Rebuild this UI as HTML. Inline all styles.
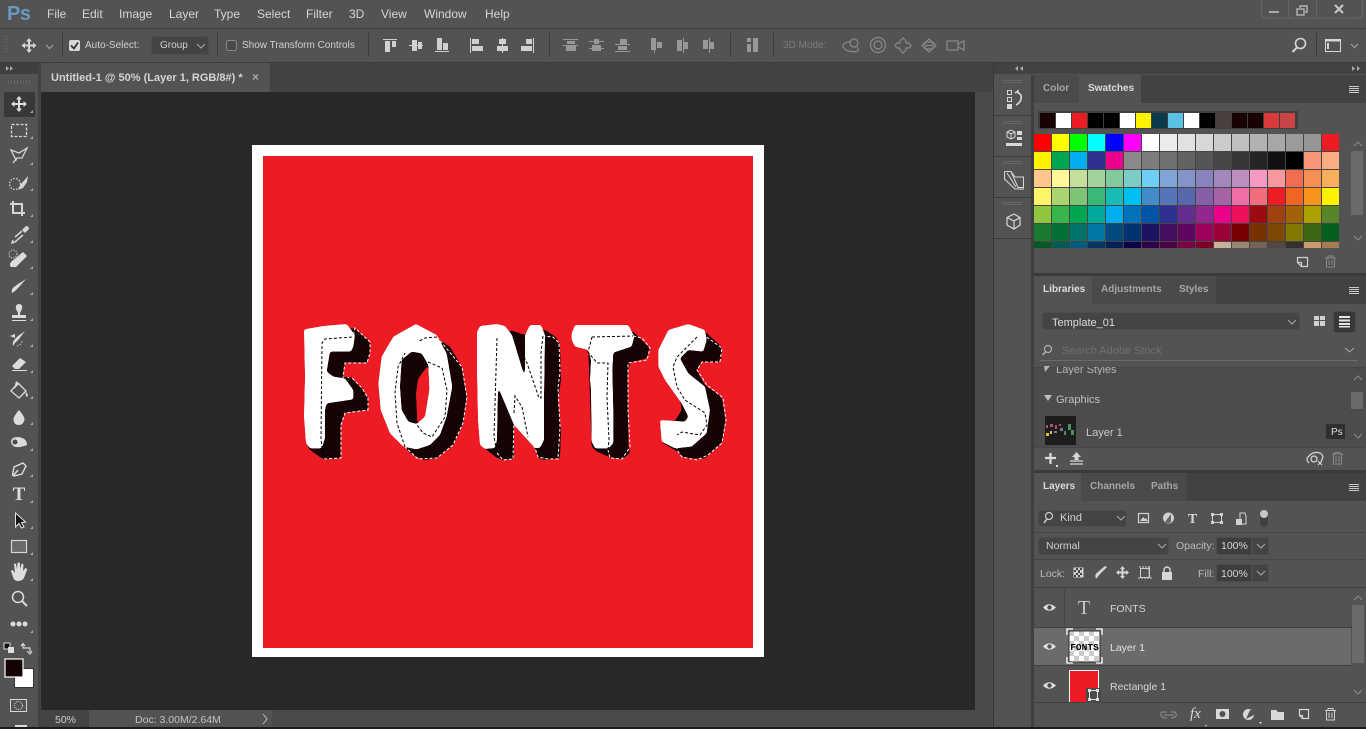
<!DOCTYPE html>
<html><head><meta charset="utf-8"><title>Photoshop</title>
<style>
html,body{margin:0;padding:0;background:#535353;}
#p{position:relative;width:1366px;height:729px;overflow:hidden;background:#535353;font-family:"Liberation Sans",sans-serif;font-size:11px;color:#d0d0d0;}
#p div,#p span.t{position:absolute;white-space:nowrap;}
.t{position:absolute;white-space:nowrap;line-height:14px;}
.m{top:7px;font-size:12px;color:#d6d6d6;}
.tab{font-size:10px;font-weight:bold;color:#a6a6a6;line-height:14px;}
#sw{left:1034px;top:134px;width:305px;height:114px;overflow:hidden;display:grid;grid-template-columns:repeat(17,17px);grid-auto-rows:17px;gap:1px;background:#454545;}
#sw i,#rc i{display:block;}
#sw i{position:static;}
#rc{left:1038px;top:111px;width:260px;height:18px;background:#3f3f3f;display:grid;grid-template-columns:repeat(16,15px);gap:1px;padding:2px 0 0 2px;box-sizing:border-box;grid-auto-rows:15px;}
svg{position:absolute;left:0;top:0;}
</style></head><body><div id="p">

<!-- structural bands -->
<div style="left:0;top:28px;width:1366px;height:1px;background:#3a3a3a"></div>
<div style="left:0;top:62px;width:1366px;height:1px;background:#3a3a3a"></div>
<div style="left:0;top:63px;width:41px;height:11px;background:#3f3f3f"></div>
<div style="left:38px;top:63px;width:3px;height:666px;background:#434343"></div>
<div style="left:41px;top:63px;width:952px;height:29px;background:#434343"></div>
<div style="left:41px;top:63px;width:229px;height:29px;background:#535353"></div>
<div style="left:41px;top:92px;width:934px;height:618px;background:#282828"></div>
<div style="left:975px;top:92px;width:18px;height:618px;background:#4b4b4b"></div>
<div style="left:41px;top:710px;width:952px;height:17px;background:#4a4a4a"></div>
<div style="left:41px;top:710px;width:48px;height:17px;background:#444"></div>
<div style="left:89px;top:710px;width:183px;height:17px;background:#525252"></div>
<div style="left:0;top:727px;width:1366px;height:2px;background:#1c1c1c"></div>
<div style="left:4px;top:92px;width:31px;height:25px;background:#383838"></div>

<!-- doc -->
<div style="left:252px;top:145px;width:512px;height:512px;background:#fff"></div>
<div style="left:263px;top:156px;width:490px;height:492px;background:#ed1c24"></div>

<!-- right dock -->
<div style="left:993px;top:63px;width:373px;height:11px;background:#424242"></div>
<div style="left:993px;top:63px;width:1px;height:664px;background:#393939"></div>
<div style="left:1031px;top:75px;width:3px;height:652px;background:#3f3f3f"></div>
<div style="left:994px;top:115px;width:37px;height:1px;background:#3a3a3a"></div>
<div style="left:994px;top:156px;width:37px;height:1px;background:#3a3a3a"></div>
<div style="left:994px;top:197px;width:37px;height:1px;background:#3a3a3a"></div>
<div style="left:994px;top:238px;width:37px;height:1px;background:#3a3a3a"></div>

<!-- color panel -->
<div style="left:1034px;top:75px;width:332px;height:28px;background:#424242"></div>
<div style="left:1034px;top:75px;width:45px;height:28px;background:#4a4a4a"></div>
<div style="left:1079px;top:75px;width:62px;height:28px;background:#535353"></div>
<div style="left:1034px;top:273px;width:332px;height:3px;background:#3a3a3a"></div>

<!-- libraries panel -->
<div style="left:1034px;top:276px;width:332px;height:28px;background:#424242"></div>
<div style="left:1034px;top:276px;width:58px;height:28px;background:#535353"></div>
<div style="left:1092px;top:276px;width:77px;height:28px;background:#4a4a4a"></div>
<div style="left:1169px;top:276px;width:47px;height:28px;background:#4a4a4a"></div>
<div style="left:1042px;top:312px;width:258px;height:18px;background:#444;border-radius:3px;border:1px solid #4d4d4d;box-sizing:border-box"></div>
<div style="left:1333px;top:311px;width:23px;height:22px;background:#383838;border-radius:3px;border:1px solid #4a4a4a;box-sizing:border-box"></div>
<div style="left:1040px;top:360px;width:318px;height:1px;background:#6a6a6a"></div>
<div style="left:1034px;top:367px;width:332px;height:80px;background:#4c4c4c"></div>
<div style="left:1034px;top:367px;width:332px;height:1px;background:#454545"></div>
<div style="left:1034px;top:447px;width:332px;height:1px;background:#464646"></div>
<div style="left:1034px;top:470px;width:332px;height:3px;background:#3a3a3a"></div>

<!-- layers panel -->
<div style="left:1034px;top:473px;width:332px;height:28px;background:#424242"></div>
<div style="left:1034px;top:473px;width:47px;height:28px;background:#535353"></div>
<div style="left:1081px;top:473px;width:60px;height:28px;background:#4a4a4a"></div>
<div style="left:1141px;top:473px;width:45px;height:28px;background:#4a4a4a"></div>
<div style="left:1038px;top:510px;width:89px;height:17px;background:#444;border-radius:3px;border:1px solid #4d4d4d;box-sizing:border-box"></div>
<div style="left:1038px;top:537px;width:131px;height:18px;background:#444;border-radius:3px;border:1px solid #4d4d4d;box-sizing:border-box"></div>
<div style="left:1216px;top:537px;width:36px;height:18px;background:#3d3d3d;border:1px solid #4d4d4d;box-sizing:border-box"></div>
<div style="left:1252px;top:537px;width:17px;height:18px;background:#444;border:1px solid #4d4d4d;box-sizing:border-box"></div>
<div style="left:1216px;top:564px;width:36px;height:18px;background:#3d3d3d;border:1px solid #4d4d4d;box-sizing:border-box"></div>
<div style="left:1252px;top:564px;width:17px;height:18px;background:#444;border:1px solid #4d4d4d;box-sizing:border-box"></div>
<div style="left:1034px;top:532px;width:332px;height:1px;background:#474747"></div>
<div style="left:1034px;top:559px;width:332px;height:1px;background:#474747"></div>
<div style="left:1034px;top:587px;width:332px;height:1px;background:#3f3f3f"></div>
<div style="left:1034px;top:627px;width:318px;height:1px;background:#3f3f3f"></div>
<div style="left:1034px;top:628px;width:317px;height:37px;background:#6b6b6b"></div>
<div style="left:1034px;top:665px;width:318px;height:1px;background:#3f3f3f"></div>
<div style="left:1064px;top:588px;width:1px;height:39px;background:#474747"></div>
<div style="left:1034px;top:702px;width:332px;height:1px;background:#3f3f3f"></div>
<!-- scrollbars -->
<div style="left:1351px;top:151px;width:12px;height:64px;background:#6a6a6a"></div>
<div style="left:1351px;top:392px;width:12px;height:17px;background:#6a6a6a"></div>
<div style="left:1352px;top:605px;width:12px;height:58px;background:#6a6a6a"></div>

<!-- swatches -->
<div id="rc">
<i style="background:#160302"></i><i style="background:#fff"></i><i style="background:#ed1c24"></i><i style="background:#000"></i><i style="background:#000"></i><i style="background:#fff"></i><i style="background:#fff200"></i><i style="background:#0b3c4d"></i><i style="background:#5bc0e4"></i><i style="background:#fff"></i><i style="background:#000"></i><i style="background:#4a4040"></i><i style="background:#160302"></i><i style="background:#160302"></i><i style="background:#d93a3a"></i><i style="background:#c94545"></i>
</div>
<div id="sw">
<i style="background:#f00"></i><i style="background:#ff0"></i><i style="background:#0f0"></i><i style="background:#0ff"></i><i style="background:#00f"></i><i style="background:#f0f"></i><i style="background:#fff"></i><i style="background:#ebebeb"></i><i style="background:#e1e1e1"></i><i style="background:#d7d7d7"></i><i style="background:#cbcbcb"></i><i style="background:#c0c0c0"></i><i style="background:#b2b2b2"></i><i style="background:#a7a7a7"></i><i style="background:#9b9b9b"></i><i style="background:#959595"></i><i style="background:#ed1c24"></i>
<i style="background:#fff200"></i><i style="background:#00a651"></i><i style="background:#00aeef"></i><i style="background:#2e3192"></i><i style="background:#ec008c"></i><i style="background:#898989"></i><i style="background:#7d7d7d"></i><i style="background:#707070"></i><i style="background:#636363"></i><i style="background:#555"></i><i style="background:#464646"></i><i style="background:#363636"></i><i style="background:#252525"></i><i style="background:#111"></i><i style="background:#000"></i><i style="background:#f7977a"></i><i style="background:#f9ad81"></i>
<i style="background:#fdc68a"></i><i style="background:#fff79a"></i><i style="background:#c4df9b"></i><i style="background:#a2d39c"></i><i style="background:#82ca9d"></i><i style="background:#7bcdc8"></i><i style="background:#6ecff6"></i><i style="background:#7ea7d8"></i><i style="background:#8493ca"></i><i style="background:#8882be"></i><i style="background:#a187be"></i><i style="background:#bc8dbf"></i><i style="background:#f49ac2"></i><i style="background:#f6989d"></i><i style="background:#f26c4f"></i><i style="background:#f68e55"></i><i style="background:#fbaf5c"></i>
<i style="background:#fff467"></i><i style="background:#acd372"></i><i style="background:#7cc576"></i><i style="background:#3bb878"></i><i style="background:#1abbb4"></i><i style="background:#00bff3"></i><i style="background:#438cca"></i><i style="background:#5574b9"></i><i style="background:#5868ac"></i><i style="background:#855fa8"></i><i style="background:#a763a8"></i><i style="background:#ef6ea8"></i><i style="background:#f16d7e"></i><i style="background:#ee1d24"></i><i style="background:#f16522"></i><i style="background:#f7941d"></i><i style="background:#fff200"></i>
<i style="background:#8fc63d"></i><i style="background:#37b44a"></i><i style="background:#00a650"></i><i style="background:#00a99e"></i><i style="background:#00aeef"></i><i style="background:#0072bc"></i><i style="background:#0054a5"></i><i style="background:#2f3192"></i><i style="background:#652c91"></i><i style="background:#91278f"></i><i style="background:#ed008c"></i><i style="background:#ee105a"></i><i style="background:#9d0a0f"></i><i style="background:#a1410d"></i><i style="background:#a36209"></i><i style="background:#aba000"></i><i style="background:#588528"></i>
<i style="background:#197b30"></i><i style="background:#007236"></i><i style="background:#00736a"></i><i style="background:#0076a4"></i><i style="background:#004a80"></i><i style="background:#003370"></i><i style="background:#1d1363"></i><i style="background:#450e61"></i><i style="background:#62055f"></i><i style="background:#9e005c"></i><i style="background:#9d0039"></i><i style="background:#790000"></i><i style="background:#7b3000"></i><i style="background:#7c4900"></i><i style="background:#827a00"></i><i style="background:#3e6617"></i><i style="background:#045f20"></i>
<i style="background:#005826"></i><i style="background:#005952"></i><i style="background:#005b7e"></i><i style="background:#003562"></i><i style="background:#002056"></i><i style="background:#0c004b"></i><i style="background:#30004a"></i><i style="background:#4b0048"></i><i style="background:#7a0045"></i><i style="background:#7a0026"></i><i style="background:#c7b299"></i><i style="background:#998675"></i><i style="background:#736357"></i><i style="background:#534741"></i><i style="background:#362f2d"></i><i style="background:#c69c6d"></i><i style="background:#a77c50"></i>
</div>

<!-- thumbnails -->
<div style="left:1045px;top:416px;width:31px;height:29px;background:#1d1d1d"></div>
<div style="left:1069px;top:670px;width:30px;height:32px;background:#ed1c24;border:1px solid #fff;border-bottom:none;box-sizing:border-box"></div>

<svg width="1366" height="729" viewBox="0 0 1366 729" xmlns="http://www.w3.org/2000/svg">
<defs>
<pattern id="ck" width="10" height="10" patternUnits="userSpaceOnUse" x="1069" y="631"><rect width="10" height="10" fill="#fff"/><rect width="5" height="5" fill="#ccc"/><rect x="5" y="5" width="5" height="5" fill="#ccc"/></pattern>
<filter id="sm" x="0" y="0" width="1" height="1" filterUnits="objectBoundingBox" color-interpolation-filters="sRGB"><feGaussianBlur stdDeviation="1.300"/><feComponentTransfer><feFuncA type="linear" slope="10" intercept="-4.500"/></feComponentTransfer></filter>
</defs>

<!-- FONTS artwork: shadows -->
<g filter="url(#sm)">
<g transform="translate(290 310) scale(.3333)" fill="#160304">
<path d="M100 60L195 55L240 95L240 130L232 158L165 158L158 200L185 205L215 235L235 265L235 300L165 308L152 345L152 445L100 448L60 420L48 400L60 200Z"/>
<path fill-rule="evenodd" d="M378 45L430 78L480 110L515 170L530 260L520 340L490 405L440 445L400 450L360 430L345 410L300 370L272 300L265 220L275 140L310 80ZM415 165L385 205L378 250L382 342L405 320L418 240Z"/>
</g>
<path fill="#160304" d="M510 330L525 335L530 328L545 330L556 337L560 345L561 380L558 400L561 430L560 458L545 460L538 458L535 448L525 435L515 400L505 350Z"/>
<path fill="#160304" d="M497 385L514 420L514 459L503 460L497 458L488 451L480 445L497 440Z"/>
<g transform="translate(515 310) scale(.3333)" fill="#160304">
<path d="M230 60L355 65L405 115L395 145L345 158L338 190L340 300L340 400L345 430L320 448L280 440L245 425L230 410L220 120Z"/>
<path d="M520 42L570 65L620 110L620 145L610 158L560 155L545 180L570 225L620 260L632 330L620 400L570 445L510 445L480 420L440 398L500 300L480 170Z"/>
</g>
</g>
<!-- FONTS artwork: faces -->
<g filter="url(#sm)">
<g transform="translate(290 310) scale(.3333)" fill="#fff">
<path d="M42 58L100 48L170 42L195 75L190 110L183 125L120 125L110 185L130 200L165 205L190 240L190 268L110 280L105 300L105 385L95 415L60 415L48 400L42 320L45 200Z"/>
<path fill-rule="evenodd" d="M378 42L440 75L470 130L487 230L470 320L450 375L420 405L380 418L340 410L300 370L272 300L265 220L275 140L310 80ZM365 125L335 150L330 230L335 300L355 335L380 342L405 320L418 240L415 165L395 130Z"/>
</g>
<path fill="#fff" d="M477 332L480 326L497 324L505 326L512 335L525 378L525 335L530 325L541 325L545 335L544 400L544 440L540 448L535 448L514 425L498 387L497 440L495 448L485 449L480 445L478 420L477 370Z"/>
<g transform="translate(515 310) scale(.3333)" fill="#fff">
<path d="M170 70L180 45L255 45L340 45L358 80L350 110L295 128L292 180L295 300L295 400L280 415L240 415L230 395L228 240L225 210L228 150L220 120L180 110L170 90Z"/>
<path d="M430 120L460 60L520 42L570 60L575 90L565 125L520 120L495 145L520 190L570 230L585 300L575 370L530 410L480 415L440 395L435 330L510 335L520 320L500 280L450 210L430 170Z"/>
</g>
</g>
<!-- marching ants -->
<g fill="none" stroke-width="1" stroke-dasharray="3 2">
<g stroke="#fff">
<path d="M322 343L325 339L353 337L355 328L370 342L370 353L367 363L345 363L343 377L352 378L362 388L368 398L368 410L345 413L341 425L341 458L323 459L322 458"/>
<path d="M437 337L462 367L467 397L463 423L453 445L437 458L418 459L405 447"/>
<path d="M497 453L503 460L513 459L514 417"/>
<path d="M528 437L535 448L538 457L548 459L558 459L560 427L558 387L560 373L559 343L553 337L543 336"/>
<path d="M633 336L642 338L650 348L647 360L628 363L628 377L628 410L630 447L622 459L610 458L608 450"/>
<path d="M697 337L705 336L722 348L720 362L702 362L697 370L707 385L723 398L726 420L722 443L708 455L697 460L682 457L677 450L677 435"/>
</g>
<g stroke="#000">
<path d="M323 459L321 438L322 343L325 339L353 337"/><path d="M352 378L343 377M362 388L352 388"/>
<path d="M437 337L425 338L418 342M405 447L397 423L395 393L398 367L405 353M428 362L442 368L447 390L445 417L432 437L423 433L417 425"/>
<path d="M497 338L494 437L497 453"/>
<path d="M514 413L515 396L522 407L528 437M543 336L541 352L541 398L539 398L527 363L515 338"/>
<path d="M592 337L633 336M608 450L609 440L607 397L608 363L597 363L588 352L592 337"/>
<path d="M697 337L677 357L673 367L677 387L685 400L705 413L707 425L700 435L682 432L677 435"/>
</g>
</g>

<!-- window controls -->
<g fill="none" stroke="#666"><path d="M1261.500 0V14Q1261.500 18 1266 18H1358Q1362.500 18 1362.500 14V0"/><path d="M1288.500 0V18M1316.500 0V18"/></g>
<rect x="1269" y="11" width="10" height="2" fill="#aaa"/>
<g fill="none" stroke="#b4b4b4" stroke-width="1.400"><rect x="1297" y="9" width="7" height="6"/><path d="M1300 8V6H1307V12H1305"/></g>
<path d="M1335 5L1343 13M1343 5L1335 13" stroke="#c4c4c4" stroke-width="2.200"/>

<!-- option bar -->
<g fill="#3c3c3c"><rect x="62" y="33" width="1" height="24"/><rect x="217" y="33" width="1" height="24"/><rect x="368" y="33" width="1" height="24"/><rect x="549" y="33" width="1" height="24"/><rect x="730" y="33" width="1" height="24"/><rect x="773" y="33" width="1" height="24"/><rect x="1316" y="33" width="1" height="24"/></g>
<g fill="#5c5c5c"><rect x="3" y="36" width="5" height="1"/><rect x="3" y="39" width="5" height="1"/><rect x="3" y="42" width="5" height="1"/><rect x="3" y="45" width="5" height="1"/><rect x="3" y="48" width="5" height="1"/><rect x="3" y="51" width="5" height="1"/></g>
<g fill="#d6d6d6"><path d="M29 38L32 41.500H30V44.500H33V42.500L36.500 45.500L33 48.500V46.500H30V49.500H32L29 53L26 49.500H28V46.500H25V48.500L21.500 45.500L25 42.500V44.500H28V41.500H26Z"/></g>
<path d="M46 45L49.500 48.500L53 45" fill="none" stroke="#aaa"/>
<rect x="69" y="40" width="11" height="11" rx="2" fill="#d8d8d8"/><path d="M71 45.500L74 48.500L78 42.500" fill="none" stroke="#333" stroke-width="1.800"/>
<rect x="151.500" y="36.500" width="57" height="18" rx="2" fill="#444" stroke="#4d4d4d"/>
<path d="M197 44L201 48L205 44" fill="none" stroke="#aaa"/>
<rect x="226.500" y="40.500" width="10" height="10" rx="2" fill="#4a4a4a" stroke="#888"/>
<g fill="#d0d0d0">
<rect x="383" y="39" width="14" height="1"/><rect x="385" y="41" width="5" height="11"/><rect x="392" y="41" width="4" height="6"/>
<rect x="409" y="45" width="14" height="1"/><rect x="412" y="40" width="5" height="11"/><rect x="418" y="42" width="4" height="7"/>
<rect x="435" y="51" width="14" height="1"/><rect x="437" y="38" width="5" height="12"/><rect x="443" y="43" width="5" height="7"/>
<rect x="470" y="38" width="1" height="15"/><rect x="472" y="39" width="7" height="5"/><rect x="472" y="46" width="11" height="5"/>
<rect x="502" y="38" width="1" height="15"/><rect x="499" y="39" width="7" height="5"/><rect x="497" y="46" width="11" height="5"/>
<rect x="533" y="38" width="1" height="15"/><rect x="526" y="39" width="6" height="5"/><rect x="521" y="46" width="11" height="5"/>
</g>
<g fill="#989898">
<rect x="563" y="39" width="15" height="1"/><rect x="567" y="41" width="8" height="3"/><rect x="563" y="45" width="15" height="1"/><rect x="566" y="46" width="10" height="5"/>
<rect x="589" y="41" width="15" height="1"/><rect x="594" y="39" width="5" height="5"/><rect x="589" y="48" width="15" height="1"/><rect x="592" y="45" width="9" height="6"/>
<rect x="620" y="39" width="7" height="5"/><rect x="615" y="44" width="15" height="1"/><rect x="618" y="46" width="9" height="4"/><rect x="615" y="51" width="15" height="1"/>
<rect x="651" y="38" width="5" height="12"/><rect x="654" y="38" width="1" height="15"/><rect x="657" y="42" width="5" height="6"/>
<rect x="677" y="40" width="5" height="11"/><rect x="683" y="38" width="1" height="15"/><rect x="684" y="42" width="4" height="7"/>
<rect x="703" y="40" width="5" height="9"/><rect x="709" y="38" width="1" height="15"/><rect x="710" y="42" width="4" height="7"/>
<rect x="747" y="38" width="4" height="4"/><rect x="747" y="44" width="4" height="8"/><rect x="753" y="38" width="5" height="14"/>
</g>
<g fill="none" stroke="#8a8a8a" stroke-width="1.200">
<path d="M843 45Q846 41 851 42M857 47Q860 50 856 52L848 51Q842 48 843 45"/><circle cx="854" cy="43" r="4"/>
<circle cx="878" cy="45" r="7.500"/><circle cx="878" cy="45" r="4"/>
<path d="M903 38L906 41V43L909 43L911 45.500L909 48H906V50L903 53L900 50V48H897L895 45.500L897 43H900V41Z"/>
<path d="M929 39L932 42H926ZM929 52L932 49H926ZM922 45.500L925 42.500V48.500ZM936 45.500L933 42.500V48.500ZM926 45.500H932"/>
<rect x="947" y="41" width="11" height="9"/><path d="M958 44L964 41V50L958 47"/>
</g>
<circle cx="1300.500" cy="43.500" r="5" fill="none" stroke="#d6d6d6" stroke-width="1.600"/><path d="M1297 47.500L1292.500 52" stroke="#d6d6d6" stroke-width="2"/>
<rect x="1325.500" y="39.500" width="15" height="12" fill="none" stroke="#d6d6d6"/><rect x="1325.500" y="39.500" width="15" height="2" fill="#d6d6d6"/><rect x="1327" y="43" width="2" height="6" fill="#d6d6d6"/>
<path d="M1351 44L1354.500 47.500L1358 44" fill="none" stroke="#aaa"/>

<!-- collapse arrows -->
<g fill="#aaa"><path d="M6 66L9 68.500L6 71ZM10 66L13 68.500L10 71Z"/><path d="M1018 66L1015 68.500L1018 71ZM1023 66L1020 68.500L1023 71Z"/><path d="M1352 66L1355 68.500L1352 71ZM1357 66L1360 68.500L1357 71Z"/></g>
<g fill="#666"><rect x="8" y="80" width="1" height="4"/><rect x="11" y="80" width="1" height="4"/><rect x="14" y="80" width="1" height="4"/><rect x="17" y="80" width="1" height="4"/><rect x="20" y="80" width="1" height="4"/><rect x="23" y="80" width="1" height="4"/><rect x="26" y="80" width="1" height="4"/><rect x="29" y="80" width="1" height="4"/></g>

<!-- toolbar icons -->
<path fill="#dcdcdc" d="M19 96L22 99.500H20V103H23.500V101L27 104L23.500 107V105H20V108.500H22L19 112L16 108.500H18V105H14.500V107L11 104L14.500 101V103H18V99.500H16Z"/>
<rect x="11.500" y="124.500" width="15" height="12" fill="none" stroke="#d6d6d6" stroke-width="1.300" stroke-dasharray="3 1.500"/>
<g fill="none" stroke="#d6d6d6" stroke-width="1.300">
<path d="M11 150L19 153L27 148L22 158L17 158L16 160ZM17 158L13 163"/>
<circle cx="15" cy="184" r="5.500" stroke-dasharray="1.500 1.500"/>
<path d="M13 201V213H25M10 204H22V216" stroke-width="2"/>
<path d="M15 237L22 231M13 240L12 243L15 242L23 235" stroke-width="1.500"/>
</g>
<path fill="#d6d6d6" d="M28 176L21 184L18 190L23 188L27 182ZM26 226L22 230L25 233L29 229Q29 226 26 226Z"/>
<path fill="#dcdcdc" d="M23 252L27 256L16 267L11 267Q9 265 11 262Z"/><circle cx="13" cy="254" r="4" fill="none" stroke="#d6d6d6" stroke-dasharray="1.200 1.200"/>
<path fill="#dcdcdc" d="M26 279L19 287L15 291L12 293Q11 289 14 287L18 284ZM19 304Q15 304 16 309L18 313V315H12V318H26V315H20V313L22 309Q23 304 19 304ZM12 320H26V321H12Z"/>
<path fill="#dcdcdc" d="M25 331L19 339L15 343L13 346Q12 342 15 339L18 336ZM10 336L15 334V338Z"/><path d="M22 341Q21 345 17 346" stroke="#ccc" fill="none" stroke-dasharray="1.500 1.500"/>
<path fill="#dcdcdc" d="M20 358L26 362L19 369H15L12 366Z"/><rect x="12" y="370" width="15" height="1" fill="#dcdcdc"/>
<path fill="none" stroke="#dcdcdc" stroke-width="1.300" d="M18 383L26 391L19 398L11 391Z"/><path fill="#dcdcdc" d="M16 381L19 384L14 389ZM26 392Q29 395 27 397Q25 396 26 392Z"/>
<path fill="#dcdcdc" d="M19 410Q25 417 24.500 420Q23 425 19 425Q14 425 13.500 420Q13 417 19 410Z"/>
<path fill="#dcdcdc" d="M11 442Q11 437 18 437Q27 438 27 445Q25 446 20 447Q12 448 11 442Z"/><circle cx="15" cy="442" r="2.500" fill="#4a4a4a"/>
<path fill="none" stroke="#dcdcdc" stroke-width="1.400" d="M23 463L26 466L22 474L14 476L12.500 475L14 467ZM13 476L18 470"/>
<text x="19" y="500" text-anchor="middle" font-family="Liberation Serif,serif" font-weight="bold" font-size="19" fill="#dcdcdc">T</text>
<path fill="#161616" stroke="#e0e0e0" d="M15.500 513V527L19 523.500L21.500 528L24 527L21.500 522.500L25.500 522Z"/>
<rect x="11.500" y="540.500" width="15" height="12" fill="#6a6a6a" stroke="#d6d6d6" stroke-width="1.200"/>
<path fill="#dcdcdc" d="M14 564Q15 563 16 564L17 569L17.500 563Q19 562 20 563L20 569L21.500 564Q23 563 23.500 565L23 571L25.500 568Q27 568 27 570L24 578Q22 581 18 581Q14 581 13 577L11 571Q12 569 13.500 571L15 573Z"/>
<circle cx="18" cy="597" r="5.500" fill="none" stroke="#dcdcdc" stroke-width="1.500"/><path d="M22 601L27 606" stroke="#dcdcdc" stroke-width="2"/>
<circle cx="13" cy="624" r="2.500" fill="#dcdcdc"/><circle cx="19" cy="624" r="2.500" fill="#dcdcdc"/><circle cx="25" cy="624" r="2.500" fill="#dcdcdc"/>
<g fill="#aaa"><path d="M33 110V113H30ZM33 136V139H30ZM33 162V165H30ZM33 188V191H30ZM33 214V217H30ZM33 240V243H30ZM33 266V269H30ZM33 292V295H30ZM33 318V321H30ZM33 344V347H30ZM33 370V373H30ZM33 396V399H30ZM33 422V425H30ZM33 448V451H30ZM33 474V477H30ZM33 500V503H30ZM33 526V529H30ZM33 552V555H30ZM33 578V581H30ZM33 630V633H30Z"/></g>
<rect x="4" y="643" width="6" height="6" fill="#111" stroke="#ddd"/><rect x="8" y="647" width="6" height="6" fill="#ddd"/>
<path d="M23 644V648H30V652M21 646L23 643.500L25 646M27 651L30 654L32 651" fill="none" stroke="#d6d6d6" stroke-width="1.200"/>
<rect x="14.500" y="668.500" width="19" height="19" fill="#fff" stroke="#333"/>
<rect x="5" y="659" width="18" height="18" fill="#160304" stroke="#fff" stroke-width="1.200"/>
<rect x="10.500" y="699.500" width="16" height="12" fill="none" stroke="#d6d6d6"/><circle cx="18.500" cy="705.500" r="4" fill="none" stroke="#d6d6d6" stroke-dasharray="1 1"/>
<rect x="15" y="725" width="12" height="2" fill="#ddd"/>

<!-- dock icons -->
<g fill="#666"><path d="M1003 80h19v1h-19zM1003 82h19v1h-19zM1003 121h19v1h-19zM1003 123h19v1h-19zM1003 161h19v1h-19zM1003 163h19v1h-19zM1003 202h19v1h-19zM1003 204h19v1h-19z"/></g>
<g fill="none" stroke="#d8d8d8">
<rect x="1007.500" y="90.500" width="4" height="4"/><rect x="1007.500" y="97.500" width="4" height="4"/>
<path d="M1015 93L1018 91V93Q1022 94 1021 99Q1020 103 1016 105" stroke-width="1.600"/>
<path d="M1007 132L1011 130L1015 132V137L1011 139L1007 137ZM1007 132L1011 134L1015 132M1011 134V139"/>
<path d="M1004.500 171.500H1011L1018 187.500H1023.500V177H1015L1011 171.500M1004.500 171.500V179L1015 189H1024M1007 173L1016 187"/>
<path d="M1014 214L1020 217.500V225L1014 229L1007 225V217.500ZM1007 217.500L1014 221L1020 217.500M1014 221V229" stroke-width="1.200"/>
</g>
<g fill="#d8d8d8"><rect x="1007" y="104" width="5" height="5"/><rect x="1017" y="131" width="5" height="4"/><rect x="1017" y="137" width="5" height="3"/><rect x="1006" y="143" width="16" height="3"/></g>

<!-- panel menu glyphs -->
<g fill="#c8c8c8"><path d="M1349 86h10v1h-10zM1349 88h10v1h-10zM1349 90h10v1h-10zM1349 92h10v1h-10zM1349 287h10v1h-10zM1349 289h10v1h-10zM1349 291h10v1h-10zM1349 293h10v1h-10zM1349 484h10v1h-10zM1349 486h10v1h-10zM1349 488h10v1h-10zM1349 490h10v1h-10z"/></g>

<!-- swatches scroll + footer -->
<g fill="none" stroke="#8c8c8c"><path d="M1354 146L1358 142L1362 146M1354 236L1358 240L1362 236M1354 380L1358 376L1362 380M1354 434L1358 438L1362 434M1354 600L1358 596L1362 600M1354 690L1358 694L1362 690"/></g>
<path d="M1297.500 257.500H1307.500V266.500H1301.500L1297.500 262.500ZM1297.500 262.500H1301.500V266.500" fill="none" stroke="#d0d0d0" stroke-width="1.200"/>
<g fill="none" stroke="#8a8a8a"><path d="M1325 258H1336M1328 258V256H1333V258M1326.500 258V267H1334.500V258M1329 260V265M1332 260V265"/></g>

<!-- libraries widgets -->
<path d="M1288 320L1292 324L1296 320" fill="none" stroke="#aaa"/>
<g fill="#d0d0d0"><rect x="1314" y="316" width="5" height="4"/><rect x="1320" y="316" width="5" height="4"/><rect x="1314" y="321" width="5" height="5"/><rect x="1320" y="321" width="5" height="5"/></g>
<g fill="#e4e4e4"><rect x="1339" y="316" width="11" height="2"/><rect x="1339" y="319.500" width="11" height="2"/><rect x="1339" y="323" width="11" height="2"/><rect x="1339" y="326" width="11" height="1.500"/></g>
<circle cx="1048" cy="349" r="3.500" fill="none" stroke="#b4b4b4" stroke-width="1.200"/><path d="M1045.500 352L1042.500 355" stroke="#b4b4b4" stroke-width="1.500"/>
<path d="M1345 348L1349.500 352L1354 348" fill="none" stroke="#aaa"/>
<path d="M1044 366L1050 366L1045 372Z" fill="#b4b4b4"/>
<path d="M1044 395H1052L1048 401Z" fill="#c0c0c0"/>
<g fill="#d8c828"><rect x="1046" y="433" width="3" height="3"/><rect x="1050" y="431" width="2" height="3"/></g>
<g fill="#b05070"><rect x="1046" y="425" width="2" height="3"/><rect x="1050" y="424" width="3" height="3"/><rect x="1055" y="425" width="2" height="4"/><rect x="1059" y="424" width="2" height="2"/></g>
<g fill="#4c9060"><rect x="1068" y="424" width="3" height="6"/><rect x="1071" y="430" width="3" height="5"/><rect x="1064" y="431" width="2" height="4"/></g>
<g fill="#7878a0"><rect x="1060" y="428" width="3" height="3"/><rect x="1054" y="431" width="3" height="2"/></g>
<rect x="1326" y="424" width="19" height="15" fill="#2f2f2f"/>
<path d="M1045 458H1056M1050.500 453V464" stroke="#dcdcdc" stroke-width="2.200"/><rect x="1056" y="465" width="2" height="2" fill="#ddd"/>
<path d="M1076.500 452L1081 457H1078.500V460H1074.500V457H1072Z" fill="#d6d6d6"/><path d="M1070 461H1083M1070 464H1083" stroke="#d6d6d6" stroke-width="1.200"/>
<g fill="none" stroke="#d0d0d0" stroke-width="1.300"><path d="M1309 463Q1305 459 1309 456Q1313 451 1320 453Q1325 456 1321 461"/><circle cx="1314" cy="459" r="3"/></g><path d="M1318 461L1322 465M1322 461L1318 465" stroke="#ddd"/>
<g fill="none" stroke="#8a8a8a"><path d="M1332 454H1343M1335 454V452.500H1340V454M1333.500 454V464H1341.500V454M1336 456V462M1339 456V462"/></g>

<!-- layers filter row -->
<circle cx="1049" cy="516" r="3.500" fill="none" stroke="#ccc" stroke-width="1.200"/><path d="M1047 519L1044 523" stroke="#ccc" stroke-width="1.500"/>
<path d="M1117 516L1121 520L1125 516" fill="none" stroke="#aaa"/>
<rect x="1138.500" y="513.500" width="10" height="9" fill="none" stroke="#d0d0d0" stroke-width="1.200"/><path d="M1140 521L1143 517L1145 519L1146 518L1148 521Z" fill="#d0d0d0"/>
<circle cx="1168.500" cy="518" r="5.500" fill="#d0d0d0"/><path d="M1171 514L1171 522A5 5 0 0 1 1165 522Z" fill="#666"/>
<text x="1192.500" y="523" text-anchor="middle" font-family="Liberation Serif,serif" font-weight="bold" font-size="14" fill="#d6d6d6">T</text>
<rect x="1212.500" y="514.500" width="9" height="8" fill="none" stroke="#d0d0d0"/><g fill="#d0d0d0"><rect x="1211" y="513" width="3" height="3"/><rect x="1220" y="513" width="3" height="3"/><rect x="1211" y="521" width="3" height="3"/><rect x="1220" y="521" width="3" height="3"/></g>
<path d="M1240 513H1245L1246 516V524H1240Z" fill="none" stroke="#d0d0d0"/><rect x="1236" y="519" width="6" height="6" fill="#d0d0d0"/>
<rect x="1260" y="510" width="8" height="17" rx="4" fill="#404040"/><circle cx="1264" cy="514" r="4" fill="#c8c8c8"/>
<path d="M1158 544L1162 548L1166 544M1257 544L1261 548L1265 544M1257 571L1261 575L1265 571" fill="none" stroke="#aaa"/>

<!-- lock row -->
<rect x="1073.500" y="567.500" width="10" height="10" fill="#d0d0d0"/><g fill="#444"><rect x="1076" y="568" width="2" height="2"/><rect x="1080" y="568" width="2" height="2"/><rect x="1074" y="570" width="2" height="2"/><rect x="1078" y="570" width="2" height="3"/><rect x="1076" y="573" width="2" height="2"/><rect x="1080" y="573" width="2" height="2"/><rect x="1074" y="575" width="2" height="2"/><rect x="1078" y="575" width="2" height="2"/></g>
<path d="M1107 567L1100 574L1096 579Q1094 574 1098 572L1105 566Z" fill="#d6d6d6"/>
<path d="M1122.500 566L1125 569H1123.500V571.500H1126V570L1129 572.500L1126 575V573.500H1123.500V576H1125L1122.500 579L1120 576H1121.500V573.500H1119V575L1116 572.500L1119 570V571.500H1121.500V569H1120Z" fill="#d6d6d6"/>
<rect x="1140.500" y="568.500" width="9" height="9" fill="none" stroke="#d0d0d0"/><path d="M1139 567H1151M1149 566V578M1138 578H1152" stroke="#d0d0d0" stroke-dasharray="2 1"/>
<rect x="1162" y="572" width="10" height="8" fill="#d6d6d6"/><path d="M1164 572V569Q1167 565 1170 569V572" fill="none" stroke="#d6d6d6" stroke-width="1.400"/>

<!-- layer rows -->
<g><path d="M1043 607.500Q1049 601 1056 607.500Q1049 614 1043 607.500Z" fill="#e0e0e0"/><circle cx="1049.500" cy="607.500" r="2.200" fill="#4a4a4a"/><path d="M1043 646.500Q1049 640 1056 646.500Q1049 653 1043 646.500Z" fill="#e0e0e0"/><circle cx="1049.500" cy="646.500" r="2.200" fill="#5a5a5a"/><path d="M1043 685.500Q1049 679 1056 685.500Q1049 692 1043 685.500Z" fill="#e0e0e0"/><circle cx="1049.500" cy="685.500" r="2.200" fill="#4a4a4a"/></g>
<text x="1084" y="614" text-anchor="middle" font-family="Liberation Serif,serif" font-size="20" fill="#c8c8c8">T</text>
<rect x="1069" y="631" width="31" height="31" fill="url(#ck)"/>
<rect x="1069" y="631" width="31" height="31" fill="none" stroke="#333"/>
<path d="M1067 635V629H1073M1096 629H1102V635M1102 657V663H1096M1073 663H1067V657" fill="none" stroke="#fff" stroke-width="1.300"/>
<text x="1084.500" y="650" text-anchor="middle" font-family="Liberation Mono,monospace" font-weight="bold" font-size="9.500" fill="#000">FONTS</text>
<rect x="1086" y="688" width="15" height="15" fill="#4a4a4a"/>
<rect x="1089.500" y="690.500" width="8" height="9" fill="none" stroke="#e0e0e0"/><g fill="#e0e0e0"><rect x="1088" y="689" width="3" height="3"/><rect x="1096" y="689" width="3" height="3"/><rect x="1088" y="698" width="3" height="3"/><rect x="1096" y="698" width="3" height="3"/></g>

<!-- layers footer -->
<g fill="none" stroke="#848484" stroke-width="1.300"><path d="M1167 712H1163Q1160 712 1161 715Q1162 718 1165 718H1167M1171 712H1175Q1177 714 1176 716Q1175 718 1171 718M1164 715H1174"/></g>
<g fill="#d8d8d8">
<rect x="1216" y="709" width="13" height="10"/>
<path d="M1243 714.500A5.500 5.500 0 1 1 1254 714.500A5.500 5.500 0 1 1 1243 714.500Z"/>
<path d="M1271 710H1276L1278 712H1284V720H1271Z"/>
<path d="M1205 725h2l-1 2zM1259 722h3l-1.500 2z"/>
</g>
<circle cx="1222.500" cy="714" r="3" fill="#535353"/>
<path d="M1250 710L1254 710V715L1246 719Z" fill="#555"/>
<path d="M1299.500 709.500H1308.500V718.500H1302.500L1299.500 715.500ZM1299.500 715.500H1302.500V718.500" fill="none" stroke="#d8d8d8" stroke-width="1.200"/>
<g fill="none" stroke="#d0d0d0"><path d="M1325 710.500H1336M1328 710.500V708.500H1333V710.500M1326.500 710.500V720H1334.500V710.500M1329 712.500V718M1332 712.500V718"/></g>
<path d="M263 714L267 719L263 724" fill="none" stroke="#bbb"/>
</svg>

<!-- text -->
<span class="t" style="left:7px;top:3px;font-size:20px;line-height:22px;font-weight:bold;letter-spacing:-.5px;color:#6b97c4">Ps</span>
<span class="t m" style="left:47px">File</span>
<span class="t m" style="left:82px">Edit</span>
<span class="t m" style="left:119px">Image</span>
<span class="t m" style="left:169px">Layer</span>
<span class="t m" style="left:214px">Type</span>
<span class="t m" style="left:257px">Select</span>
<span class="t m" style="left:306px">Filter</span>
<span class="t m" style="left:349px">3D</span>
<span class="t m" style="left:381px">View</span>
<span class="t m" style="left:424px">Window</span>
<span class="t m" style="left:485px">Help</span>

<span class="t" style="left:85px;top:39px;font-size:10px;color:#d0d0d0">Auto-Select:</span>
<span class="t" style="left:160px;top:39px;font-size:10px;color:#d0d0d0">Group</span>
<span class="t" style="left:242px;top:39px;font-size:10px;color:#d0d0d0">Show Transform Controls</span>
<span class="t" style="left:783px;top:39px;font-size:10px;color:#7c7c7c">3D Mode:</span>

<span class="t" style="left:51px;top:71px;font-size:11px;font-weight:bold;color:#d4d4d4">Untitled-1 @ 50% (Layer 1, RGB/8#) *</span>
<span class="t" style="left:252px;top:70px;font-size:12px;font-weight:bold;color:#a8a8a8">×</span>
<span class="t" style="left:55px;top:713px;font-size:10.500px;color:#d0d0d0">50%</span>
<span class="t" style="left:135px;top:713px;font-size:10.500px;color:#c4c4c4">Doc: 3.00M/2.64M</span>

<span class="t tab" style="left:1043px;top:82px">Color</span>
<span class="t tab" style="left:1088px;top:82px;color:#dcdcdc">Swatches</span>
<span class="t tab" style="left:1043px;top:283px;color:#dcdcdc">Libraries</span>
<span class="t tab" style="left:1101px;top:283px">Adjustments</span>
<span class="t tab" style="left:1179px;top:283px">Styles</span>
<span class="t tab" style="left:1043px;top:480px;color:#dcdcdc">Layers</span>
<span class="t tab" style="left:1090px;top:480px">Channels</span>
<span class="t tab" style="left:1151px;top:480px">Paths</span>

<span class="t" style="left:1052px;top:316px;font-size:11px;color:#dcdcdc">Template_01</span>
<span class="t" style="left:1062px;top:344px;font-size:11px;color:#707070">Search Adobe Stock</span>
<div style="left:1056px;top:367px;width:120px;height:8px;overflow:hidden"><span class="t" style="left:0;top:-4px;font-size:11px;color:#b4b4b4">Layer Styles</span></div>
<span class="t" style="left:1056px;top:393px;font-size:11px;color:#c0c0c0">Graphics</span>
<span class="t" style="left:1086px;top:426px;font-size:11px;color:#c8c8c8">Layer 1</span>
<span class="t" style="left:1331px;top:426px;font-size:10px;color:#ddd">Ps</span>

<span class="t" style="left:1060px;top:511px;font-size:11px;color:#d0d0d0">Kind</span>
<span class="t" style="left:1046px;top:539px;font-size:10.500px;color:#d0d0d0">Normal</span>
<span class="t" style="left:1176px;top:539px;font-size:10.500px;color:#bcbcbc">Opacity:</span>
<span class="t" style="left:1221px;top:539px;font-size:10.500px;color:#d6d6d6">100%</span>
<span class="t" style="left:1040px;top:567px;font-size:10.500px;color:#bcbcbc">Lock:</span>
<span class="t" style="left:1198px;top:567px;font-size:10.500px;color:#bcbcbc">Fill:</span>
<span class="t" style="left:1221px;top:567px;font-size:10.500px;color:#d6d6d6">100%</span>
<span class="t" style="left:1110px;top:602px;font-size:10.500px;color:#d6d6d6">FONTS</span>
<span class="t" style="left:1110px;top:641px;font-size:10.500px;color:#e2e2e2">Layer 1</span>
<span class="t" style="left:1110px;top:680px;font-size:10.500px;color:#d6d6d6">Rectangle 1</span>
<span class="t" style="left:1190px;top:707px;font-size:15px;font-style:italic;font-family:'Liberation Serif',serif;color:#d8d8d8">fx</span>
</div></body></html>
